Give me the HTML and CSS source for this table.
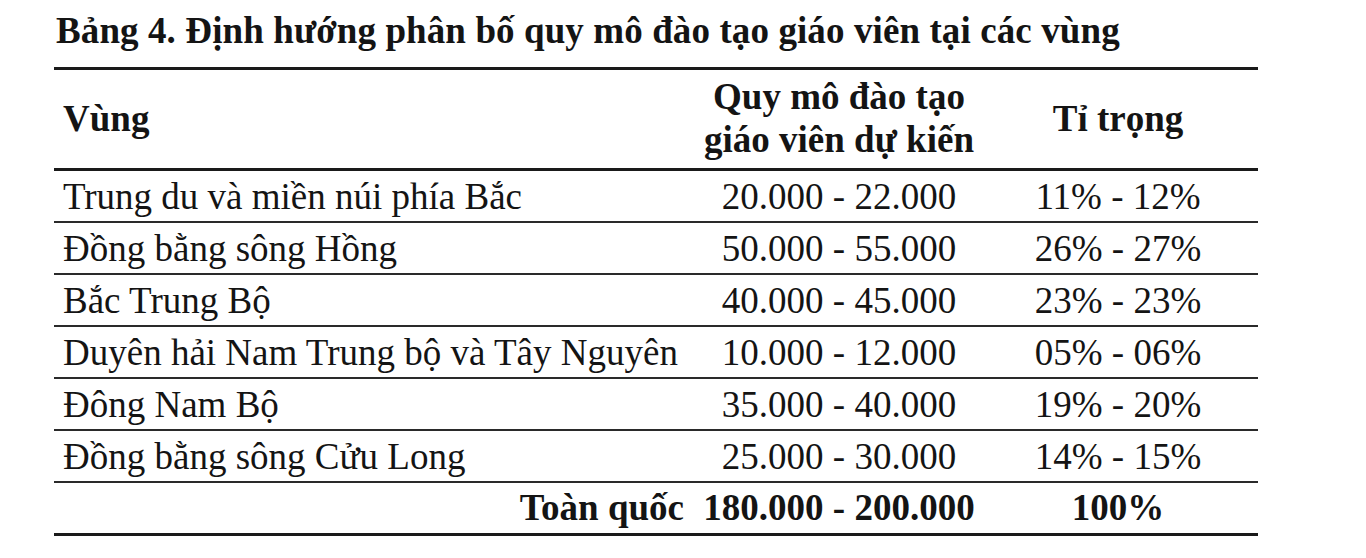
FILE: index.html
```html
<!DOCTYPE html>
<html lang="vi">
<head>
<meta charset="utf-8">
<title>Bảng 4</title>
<link rel="stylesheet" href="styles.css">
</head>
<body>
<main class="page">
  <h1 class="caption">Bảng 4. Định hướng phân bố quy mô đào tạo giáo viên tại các vùng</h1>
  <table class="tbl">
    <thead>
      <tr>
        <th class="c-region">Vùng</th>
        <th class="c-num">Quy mô đào tạo<br>giáo viên dự kiến</th>
        <th class="c-pct">Tỉ trọng</th>
      </tr>
    </thead>
    <tbody>
      <tr><td class="c-region">Trung du và miền núi phía Bắc</td><td class="c-num">20.000 - 22.000</td><td class="c-pct">11% - 12%</td></tr>
      <tr><td class="c-region">Đồng bằng sông Hồng</td><td class="c-num">50.000 - 55.000</td><td class="c-pct">26% - 27%</td></tr>
      <tr><td class="c-region">Bắc Trung Bộ</td><td class="c-num">40.000 - 45.000</td><td class="c-pct">23% - 23%</td></tr>
      <tr><td class="c-region">Duyên hải Nam Trung bộ và Tây Nguyên</td><td class="c-num">10.000 - 12.000</td><td class="c-pct">05% - 06%</td></tr>
      <tr><td class="c-region">Đông Nam Bộ</td><td class="c-num">35.000 - 40.000</td><td class="c-pct">19% - 20%</td></tr>
      <tr><td class="c-region">Đồng bằng sông Cửu Long</td><td class="c-num">25.000 - 30.000</td><td class="c-pct">14% - 15%</td></tr>
    </tbody>
    <tfoot>
      <tr><th class="c-total">Toàn quốc</th><th class="c-num">180.000 - 200.000</th><th class="c-pct">100%</th></tr>
    </tfoot>
  </table>
</main>
</body>
</html>
```

FILE: styles.css
```css
html, body {
  margin: 0;
  padding: 0;
  background: #ffffff;
}

.page {
  width: 1366px;
  height: 558px;
  font-family: "Liberation Serif", "Times New Roman", serif;
  color: #141414;
  padding: 0 0 0 54px;
  box-sizing: border-box;
}

.caption {
  margin: 0;
  padding: 9px 0 0 2px;
  height: 67px;
  font-size: 37px;
  line-height: 44px;
  font-weight: bold;
  letter-spacing: 0.1px;
  white-space: nowrap;
  box-sizing: border-box;
}

.tbl {
  width: 1204px;
  border-collapse: collapse;
  font-size: 37px;
  table-layout: fixed;
}

.tbl th,
.tbl td {
  padding: 0;
  white-space: nowrap;
}

.tbl .c-region { width: 637px; text-align: left; padding-left: 9px; }
.tbl .c-num { width: 278px; text-align: center; }
.tbl .c-pct { width: 280px; text-align: center; }
.tbl .c-total { text-align: right; padding-right: 16px; }

.tbl thead tr {
  border-top: 3px solid #1a1a1a;
  border-bottom: 3px solid #1a1a1a;
}

.tbl thead th {
  height: 96px;
  line-height: 43px;
  font-weight: bold;
  vertical-align: middle;
  padding-bottom: 2px;
}

.tbl tbody tr {
  border-bottom: 2px solid #2a2a2a;
}

.tbl tbody td {
  height: 50px;
  line-height: 49px;
  font-weight: normal;
}

.tbl tfoot tr {
  border-bottom: 3px solid #1a1a1a;
}

.tbl tfoot th {
  height: 50px;
  line-height: 50px;
  font-weight: bold;
}
```
